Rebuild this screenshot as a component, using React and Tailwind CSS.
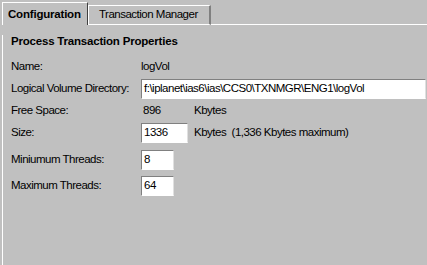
import React from 'react';

const FONT = "font-['Liberation_Sans',Arial,sans-serif]";
const TXT = 'text-[11.5px] tracking-[-0.5px]';

function Field({ value, className }) {
  return (
    <div
      className={`h-[20px] bg-white border-t border-l border-t-[#808080] border-l-[#808080] border-b border-r border-b-white border-r-[#e0e0e0] flex items-center pl-[2px] ${TXT} text-black ${className}`}
    >
      {value}
    </div>
  );
}

function Row({ label, children, className = '' }) {
  return (
    <div className={`h-[22px] flex items-center ${className}`}>
      <div className={`w-[130px] shrink-0 ${TXT}`}>{label}</div>
      {children}
    </div>
  );
}

export default function App() {
  return (
    <div className={`w-[427px] h-[265px] bg-[#c0c0c0] overflow-hidden text-black ${FONT}`}>
      {/* Tab strip */}
      <div className="flex items-end h-[25px] pl-[2px]">
        <div className="w-[86px] h-[23px] border-t border-l border-white border-r border-r-[#404040] flex items-center pl-[5px] pt-[2px] text-[11.5px] font-bold tracking-[-0.2px]">
          Configuration
        </div>
        <div className="w-[123px] h-[20px] border-t border-l border-b border-white border-r-2 border-r-[#808080] flex items-center pl-[10px] text-[11.5px] tracking-[-0.5px]">
          Transaction Manager
        </div>
        <div className="flex-1 h-[1px] bg-white" />
      </div>

      {/* Panel */}
      <div className="ml-[2px] h-[240px] border-l border-white pl-[8px]">
        <div className="mt-[10px] h-[14px] flex items-center text-[11.5px] font-bold tracking-[-0.2px]">
          Process Transaction Properties
        </div>

        <Row label="Name:" className="mt-[7px]">
          <span className={TXT}>logVol</span>
        </Row>
        <Row label="Logical Volume Directory:">
          <Field value="f:\iplanet\ias6\ias\CCS0\TXNMGR\ENG1\logVol" className="flex-1 mr-[1px]" />
        </Row>
        <Row label="Free Space:">
          <span className={`w-[53px] pl-[2px] ${TXT}`}>896</span>
          <span className={TXT}>Kbytes</span>
        </Row>
        <Row label="Size:">
          <Field value="1336" className="w-[47px]" />
          <span className={`ml-[6px] ${TXT} whitespace-pre`}>Kbytes  (1,336 Kbytes maximum)</span>
        </Row>
        <Row label="Miniumum Threads:" className="mt-[5px]">
          <Field value="8" className="w-[33px]" />
        </Row>
        <Row label="Maximum Threads:" className="mt-[4px]">
          <Field value="64" className="w-[33px]" />
        </Row>
      </div>
    </div>
  );
}
